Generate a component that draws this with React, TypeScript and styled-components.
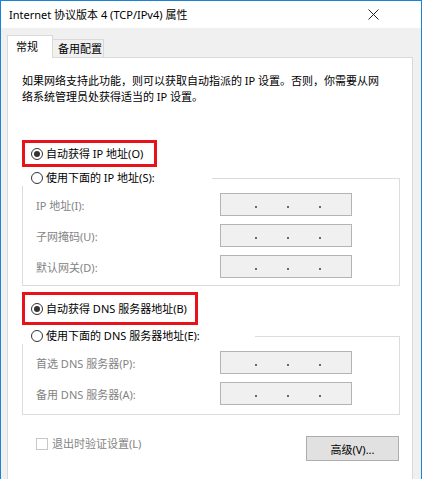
import { FC } from "react";
import styled, { createGlobalStyle } from "styled-components";

const GlobalStyle = createGlobalStyle`
  html, body {
    margin: 0;
    padding: 0;
    background: #ffffff;
  }
  body {
    font-family: "Noto Sans", "Noto Sans CJK SC", sans-serif;
    font-size: 11px;
    color: #000;
  }
`;

type Field = { label: string };

const ipFields: Field[] = [
  { label: "IP 地址(I):" },
  { label: "子网掩码(U):" },
  { label: "默认网关(D):" },
];

const dnsFields: Field[] = [
  { label: "首选 DNS 服务器(P):" },
  { label: "备用 DNS 服务器(A):" },
];

const IpBox: FC = () => (
  <SIpInput>
    <SDot />
    <SDot />
    <SDot />
  </SIpInput>
);

const Radio: FC<{ checked?: boolean; label: string }> = ({ checked, label }) => (
  <SRadioRow>
    <SRadio $checked={checked} />
    <span>{label}</span>
  </SRadioRow>
);

export default function App() {
  return (
    <>
      <GlobalStyle />
      <SWindow>
        <STitleBar>
          <STitle>Internet 协议版本 4 (TCP/IPv4) 属性</STitle>
          <SClose>
            <svg width="11" height="11" viewBox="0 0 11 11">
              <path d="M0.5 0.5 L10.5 10.5 M10.5 0.5 L0.5 10.5" stroke="#222" strokeWidth="1" />
            </svg>
          </SClose>
        </STitleBar>

        <SBody>
          <STabs>
            <STab $active>常规</STab>
            <STab>备用配置</STab>
          </STabs>

          <SPanel>
            <SIntro>
              如果网络支持此功能，则可以获取自动指派的 IP 设置。否则，你需要从网
              <br />
              络系统管理员处获得适当的 IP 设置。
            </SIntro>

            <SMark $width={135} $height={27} $top={35}>
              <Radio checked label="自动获得 IP 地址(O)" />
            </SMark>

            <SGroup $top={11}>
              <SGroupHead $width={190}>
                <Radio label="使用下面的 IP 地址(S):" />
              </SGroupHead>
              <SFields $bottom={7}>
                {ipFields.map((f) => (
                  <SFieldRow key={f.label}>
                    <SLabel>{f.label}</SLabel>
                    <IpBox />
                  </SFieldRow>
                ))}
              </SFields>
            </SGroup>

            <SMark $width={176} $height={33} $top={6}>
              <Radio checked label="自动获得 DNS 服务器地址(B)" />
            </SMark>

            <SGroup $top={11}>
              <SGroupHead $width={233}>
                <Radio label="使用下面的 DNS 服务器地址(E):" />
              </SGroupHead>
              <SFields $bottom={9}>
                {dnsFields.map((f) => (
                  <SFieldRow key={f.label}>
                    <SLabel>{f.label}</SLabel>
                    <IpBox />
                  </SFieldRow>
                ))}
              </SFields>
            </SGroup>

            <SFooter>
              <SCheckRow>
                <SCheckbox />
                <span>退出时验证设置(L)</span>
              </SCheckRow>
              <SButton>高级(V)...</SButton>
            </SFooter>
          </SPanel>
        </SBody>
      </SWindow>
    </>
  );
}

const SWindow = styled.div`
  width: 422px;
  height: 479px;
  box-sizing: border-box;
  border: 1px solid #1883d7;
  border-bottom: none;
  overflow: hidden;
  display: flex;
  flex-direction: column;
  background: #f0f0f0;
`;

const STitleBar = styled.div`
  height: 27px;
  flex: none;
  background: #ffffff;
  display: flex;
  align-items: center;
  justify-content: space-between;
  padding-left: 8px;
`;

const STitle = styled.div`
  font-size: 11px;
  line-height: 14px;
  margin-top: 1px;
`;

const SClose = styled.div`
  width: 46px;
  height: 27px;
  margin-right: 25px;
  display: flex;
  align-items: center;
  justify-content: center;
`;

const SBody = styled.div`
  flex: 1;
  padding: 8px 8px 0 6px;
  display: flex;
  flex-direction: column;
`;

const STabs = styled.div`
  display: flex;
  align-items: flex-end;
  height: 22px;
  position: relative;
  z-index: 1;
  margin-bottom: -1px;
`;

const STab = styled.div<{ $active?: boolean }>`
  box-sizing: border-box;
  height: ${(p) => (p.$active ? "23px" : "19px")};
  width: ${(p) => (p.$active ? "46px" : "51px")};
  padding-left: ${(p) => (p.$active ? "8px" : "5px")};
  border: 1px solid #d9d9d9;
  border-bottom: ${(p) => (p.$active ? "none" : "1px solid #d9d9d9")};
  border-left: ${(p) => (p.$active ? "1px solid #d9d9d9" : "none")};
  background: ${(p) => (p.$active ? "#ffffff" : "#f0f0f0")};
  display: flex;
  align-items: center;
  font-size: 11px;
  line-height: 14px;
`;

const SPanel = styled.div`
  flex: 1;
  background: #ffffff;
  border: 1px solid #d9d9d9;
  border-bottom: none;
  padding: 15px 12px 0 14px;
`;

const SIntro = styled.p`
  margin: 0;
  line-height: 16px;
  font-size: 11px;
  white-space: nowrap;
`;

const SMark = styled.div<{ $width: number; $height: number; $top: number }>`
  box-sizing: border-box;
  width: ${(p) => p.$width}px;
  height: ${(p) => p.$height}px;
  margin-top: ${(p) => p.$top}px;
  border: 3px solid #e8121a;
  padding-left: 6px;
  display: flex;
  align-items: center;
`;

const SRadioRow = styled.div`
  display: flex;
  align-items: center;
  gap: 3px;
  font-size: 11px;
  line-height: 16px;
  white-space: nowrap;
`;

const SRadio = styled.span<{ $checked?: boolean }>`
  box-sizing: border-box;
  width: 12px;
  height: 12px;
  border-radius: 50%;
  border: 1px solid #333333;
  background: #ffffff;
  display: flex;
  align-items: center;
  justify-content: center;
  &::after {
    content: "";
    width: 6px;
    height: 6px;
    border-radius: 50%;
    background: ${(p) => (p.$checked ? "#333333" : "transparent")};
  }
`;

const SGroup = styled.div<{ $top: number }>`
  margin-top: ${(p) => p.$top}px;
  width: 378px;
  box-sizing: border-box;
  border: 1px solid #dcdcdc;
`;

const SGroupHead = styled.div<{ $width: number }>`
  box-sizing: border-box;
  width: ${(p) => p.$width}px;
  height: 16px;
  margin: -9px 0 0 -1px;
  padding-left: 9px;
  background: #ffffff;
  display: flex;
  align-items: center;
`;

const SFields = styled.div<{ $bottom: number }>`
  display: flex;
  flex-direction: column;
  gap: 8px;
  padding: 7px 0 ${(p) => p.$bottom}px 13px;
`;

const SFieldRow = styled.div`
  display: grid;
  grid-template-columns: 184px 132px;
  align-items: center;
`;

const SLabel = styled.span`
  color: #838383;
  font-size: 11px;
  white-space: nowrap;
`;

const SIpInput = styled.div`
  box-sizing: border-box;
  height: 23px;
  border: 1px solid #b4b4b4;
  background: #f0f0f0;
  display: flex;
  align-items: center;
  padding-left: 34px;
  gap: 30px;
`;

const SDot = styled.span`
  width: 2px;
  height: 2px;
  margin-top: 4px;
  background: #6a6a6a;
`;

const SFooter = styled.div`
  width: 378px;
  box-sizing: border-box;
  margin-top: 21px;
  padding: 0 1px 0 14px;
  display: flex;
  justify-content: space-between;
  align-items: flex-start;
`;

const SCheckRow = styled.div`
  display: flex;
  align-items: center;
  gap: 4px;
  margin-top: 1px;
  color: #838383;
  font-size: 11px;
  line-height: 14px;
`;

const SCheckbox = styled.span`
  box-sizing: border-box;
  width: 12px;
  height: 12px;
  border: 1px solid #c8c8c8;
  background: #ffffff;
`;

const SButton = styled.button`
  box-sizing: border-box;
  width: 93px;
  height: 25px;
  border: 1px solid #adadad;
  background: #e1e1e1;
  font-family: "Noto Sans", "Noto Sans CJK SC", sans-serif;
  font-size: 11px;
  color: #000;
  padding: 0;
`;
